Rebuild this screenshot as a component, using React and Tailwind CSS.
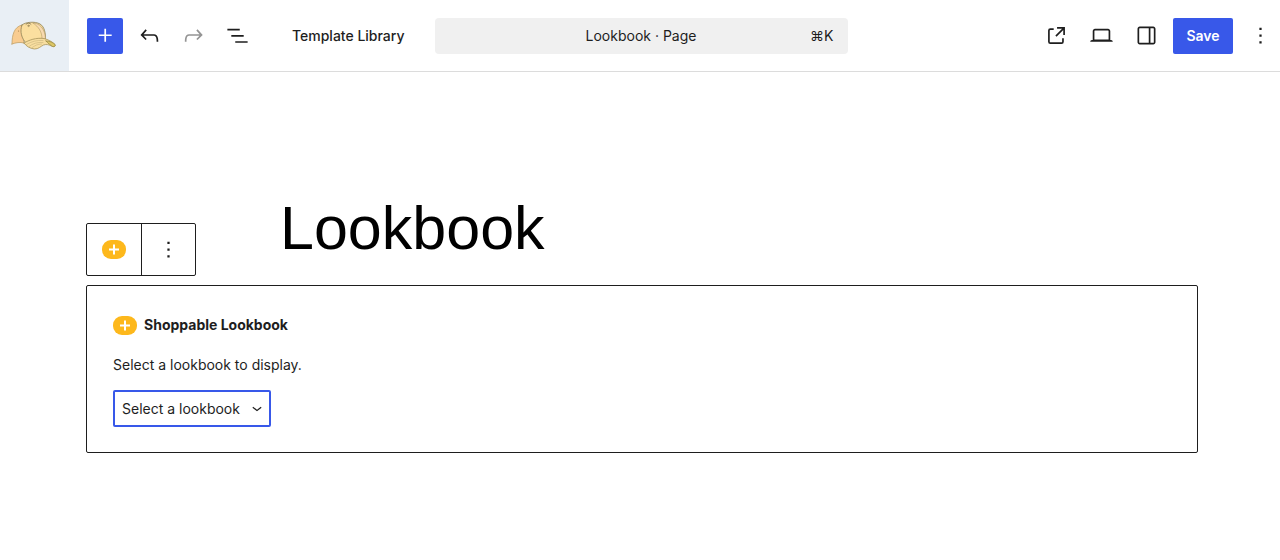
import { useState } from "react";

// 24x24 glyphs used in the editor chrome
const icons = {
  plus: "M11 12.5V17.5H12.5V12.5H17.5V11H12.5V6H11V11H6V12.5H11Z",
  undo: "M18.3 11.7c-.6-.6-1.4-.9-2.3-.9H6.7l2.9-3.3-1.1-1-4.5 5L8.5 16l1-1-2.7-2.7H16c.5 0 .9.2 1.3.5 1 1 1 3.4 1 4.5v.3h1.5v-.2c0-1.5 0-4.3-1.5-5.7z",
  redo: "M15.6 6.5l-1.1 1 2.9 3.3H8c-.9 0-1.7.3-2.3.9-1.4 1.5-1.4 4.2-1.4 5.6v.2h1.5v-.3c0-1.1 0-3.5 1-4.5.3-.3.7-.5 1.3-.5h9.2L14.5 15l1.1 1.1 4.6-4.6-4.6-5z",
  listView: "M3 6h11v1.5H3V6Zm3.5 5.5h11V13h-11v-1.5ZM21 17H10v1.5h11V17Z",
  external: "M19.5 4.5h-7V6h4.44l-5.97 5.97 1.06 1.06L18 7.06v4.44h1.5v-7Zm-13 1a2 2 0 0 0-2 2v10a2 2 0 0 0 2 2h10a2 2 0 0 0 2-2v-3H17v3a.5.5 0 0 1-.5.5h-10a.5.5 0 0 1-.5-.5v-10a.5.5 0 0 1 .5-.5h3V5.5h-3Z",
  desktop: "M20.5 16h-.7V8c0-1.1-.9-2-2-2H6.2c-1.1 0-2 .9-2 2v8h-.7c-.8 0-1.5.7-1.5 1.5h20c0-.8-.7-1.5-1.5-1.5zM5.7 8c0-.3.2-.5.5-.5h11.6c.3 0 .5.2.5.5v7.6H5.7V8z",
  sidebar: "M18 4H6c-1.1 0-2 .9-2 2v12c0 1.1.9 2 2 2h12c1.1 0 2-.9 2-2V6c0-1.1-.9-2-2-2zm-4 14.5H6c-.3 0-.5-.2-.5-.5V6c0-.3.2-.5.5-.5h8v13zm4.5-.5c0 .3-.2.5-.5.5h-2.5v-13H18c.3 0 .5.2.5.5v12z",
  more: "M13 19h-2v-2h2v2zm0-6h-2v-2h2v2zm0-6h-2V5h2v2z",
  chevron: "M17.5 11.6L12 16l-5.5-4.4.9-1.2L12 14l4.5-3.6 1 1.2z",
};

const Icon = ({ name, className = "size-[27px]" }) => (
  <svg viewBox="0 0 24 24" fill="currentColor" className={className} aria-hidden="true">
    <path d={icons[name]} />
  </svg>
);

const IconButton = ({ icon, label, className = "text-[#1e1e1e]", ...props }) => (
  <button
    type="button"
    aria-label={label}
    className={`flex size-9 shrink-0 items-center justify-center rounded-xs ${className}`}
    {...props}
  >
    <Icon name={icon} />
  </button>
);

const CapLogo = () => (
  <svg viewBox="0 0 46 30" className="h-[30px] w-[46px]" aria-hidden="true">
    <g strokeLinecap="round" strokeLinejoin="round">
      {/* crown */}
      <path d="M1 23C1 14 3 6 11 4l2 18c-4-1-8-.5-12 1z" fill="#f9cc90" stroke="#c2a26a" strokeWidth=".8" />
      <path d="M11 4c3-3 13-4 18-1 5 3 5.500 10 5.500 15-7-.5-13 1-19 4.500-5-5-7-12-4.500-18.500z" fill="#fbdf9f" stroke="#8d8054" strokeWidth=".8" />
      <path d="M22 2c6 0 12 5 12.500 16h-3.500c0-7-3-12-9-16z" fill="#f8dab0" stroke="#b29a66" strokeWidth=".6" />
      {/* brim */}
      <path d="M13 22c5-3 12-5.500 20-4.500 4 1 8 3 11 6 .7 1.500-.5 2.500-2.500 2-4-2-6-2.500-9-1.500-3 1.500-5 4-9 4-4.500-.3-8.500-3-10.500-6z" fill="#f8deA0" stroke="#a8945a" strokeWidth=".8" />
      <path d="M15.500 23.500c5-3 10-4.500 16.500-4M18 25.500c4-3 8-4.500 14-4M20.500 27c3.500-2.500 6-4 10-4" fill="none" stroke="#c9b47c" strokeWidth=".6" />
      <path d="M35 20c4 0 7 1.500 9 3.500.7 1.500-.5 2.500-2.500 2-2-1.500-4.500-3-6.500-5.500z" fill="#dcc665" stroke="#94853f" strokeWidth=".7" />
      <path d="M15 3.200c1-1.400 4-1.400 5 0" fill="none" stroke="#7f7450" strokeWidth=".8" />
      <circle cx="17.500" cy="4.800" r=".8" fill="#c9a66b" stroke="#7f7450" strokeWidth=".4" />
      <circle cx="7.500" cy="10" r=".6" fill="#a07c45" />
    </g>
  </svg>
);

const LookbookBadge = () => (
  <svg viewBox="0 0 24 19" className="h-[19px] w-6 shrink-0" aria-hidden="true">
    <rect width="24" height="19" rx="9" fill="#fdb81c" />
    <path d="M12 4.500v10M7 9.500h10" stroke="#fff" strokeWidth="2" />
  </svg>
);

const Header = () => (
  <header className="flex h-[72px] items-center border-b border-[#dcdcdc] bg-white text-sm text-[#1e1e1e]">
    <div className="flex flex-1 items-center self-stretch">
      <a
        href="#dashboard"
        aria-label="View pages"
        className="flex w-[69px] items-center self-stretch bg-[#e9eff5] pl-[11px]"
      >
        <CapLogo />
      </a>
      <div className="ml-[18px] flex items-center gap-2">
        <IconButton icon="plus" label="Add block" className="bg-[#3858e9] text-white" />
        <IconButton icon="undo" label="Undo" />
        <IconButton icon="redo" label="Redo" className="text-[#949494]" disabled />
        <IconButton icon="listView" label="Document overview" />
      </div>
      <button type="button" className="ml-[37px] pt-px font-medium whitespace-nowrap">
        Template Library
      </button>
    </div>

    <button
      type="button"
      className="ml-1 grid h-9 w-[413px] grid-cols-[1fr_auto_1fr] items-center rounded-sm bg-[#f0f0f0] px-3.5 pt-px"
    >
      <span className="col-start-2">Lookbook · Page</span>
      <span className="text-right">⌘K</span>
    </button>

    <div className="flex flex-1 items-center justify-end gap-[9px] pr-[2px]">
      <IconButton icon="external" label="View page" />
      <IconButton icon="desktop" label="Preview" />
      <IconButton icon="sidebar" label="Settings" />
      <button type="button" className="h-9 w-[60px] rounded-xs bg-[#3858e9] pt-px font-semibold text-white">
        Save
      </button>
      <IconButton icon="more" label="Options" />
    </div>
  </header>
);

const LookbookBlock = () => {
  const [lookbook, setLookbook] = useState("");

  return (
    <section className="relative rounded-xs border border-[#1e1e1e] px-[26px] pt-[27px] pb-[25px] text-sm leading-6 text-[#1e1e1e]">
      {/* Floating block toolbar */}
      <div
        role="toolbar"
        aria-label="Block tools"
        className="absolute bottom-full -left-px mb-2.5 flex h-[53px] w-[110px] divide-x divide-[#1e1e1e] rounded-xs border border-[#1e1e1e] bg-white"
      >
        <button type="button" aria-label="Shoppable Lookbook" className="flex flex-1 items-center justify-center">
          <LookbookBadge />
        </button>
        <button type="button" aria-label="Options" className="flex flex-1 items-center justify-center">
          <Icon name="more" />
        </button>
      </div>

      <h2 className="flex items-center gap-[7px] font-bold">
        <LookbookBadge />
        Shoppable Lookbook
      </h2>
      <label htmlFor="lookbook" className="mt-4 block">
        Select a lookbook to display.
      </label>
      <div className="relative mt-[13px] w-[158px]">
        <select
          id="lookbook"
          value={lookbook}
          onChange={(e) => setLookbook(e.target.value)}
          className="block h-[37px] w-full appearance-none rounded-xs border-2 border-[#3858e9] bg-white pl-[7px] outline-none"
        >
          <option value="">Select a lookbook</option>
        </select>
        <Icon name="chevron" className="pointer-events-none absolute top-2 right-1 size-5" />
      </div>
    </section>
  );
};

const App = () => {
  return (
    <div className="min-h-screen bg-white font-['Inter',sans-serif]">
      <Header />
      <main className="mr-[82px] ml-[86px] pt-[116px]">
        <h1 className="mx-auto mb-[17px] max-w-[724px] font-['Liberation_Sans',sans-serif] text-[61px] leading-[80px] text-black">
          Lookbook
        </h1>
        <LookbookBlock />
      </main>
    </div>
  );
};

export default App;
